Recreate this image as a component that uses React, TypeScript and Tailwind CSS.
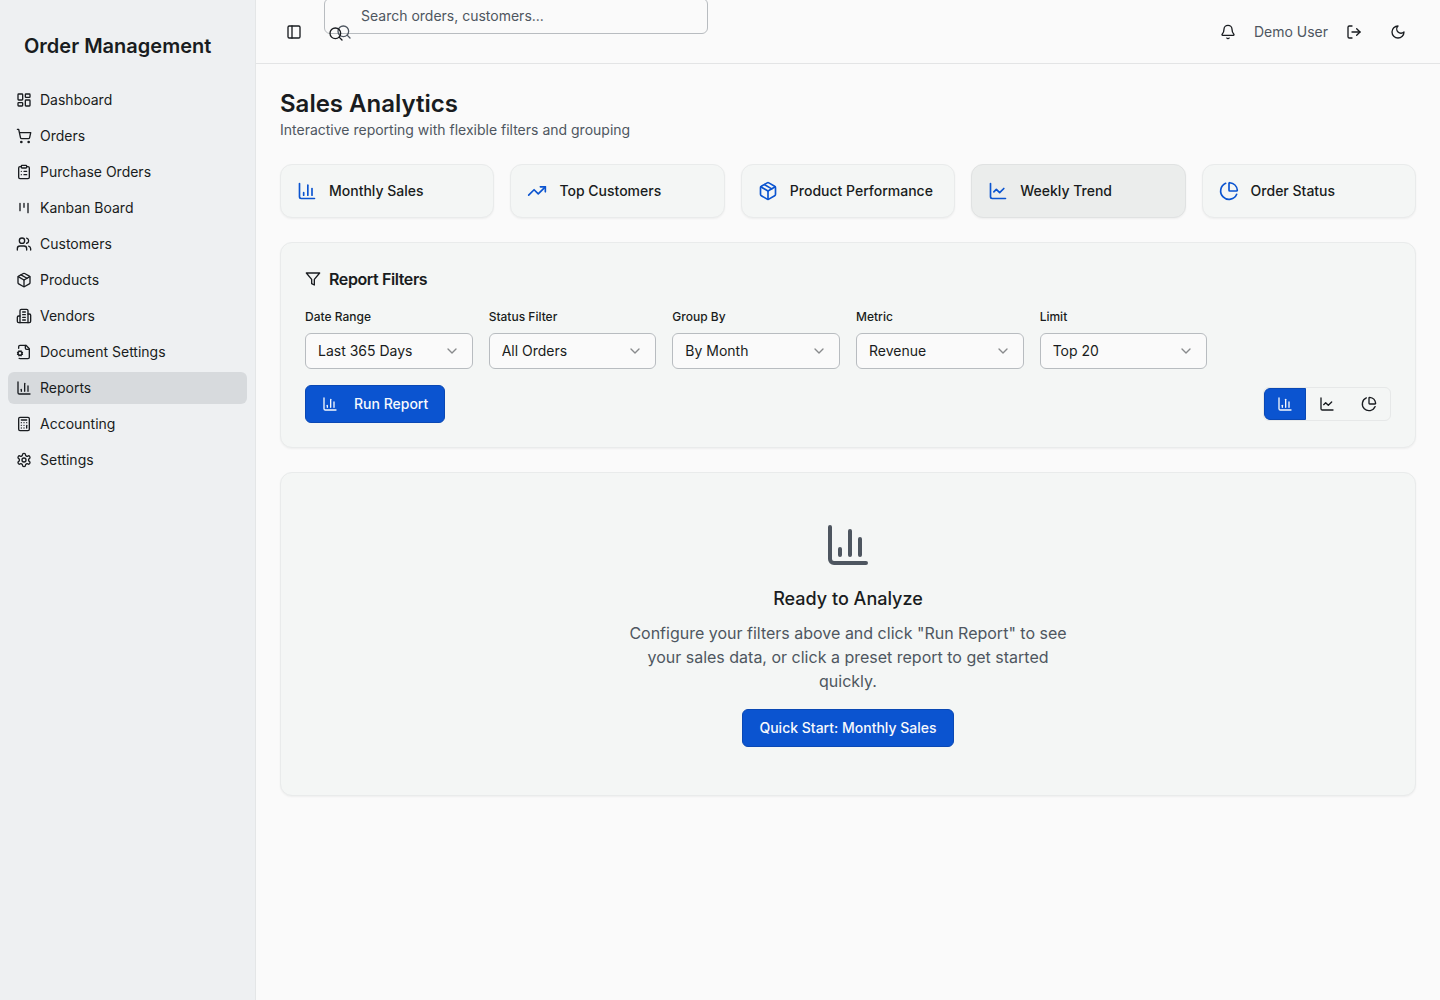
import type { ReactNode } from "react"
import {
  Bell,
  Calculator,
  ChartColumn,
  ChartLine,
  ChartPie,
  ChevronDown,
  ClipboardList,
  LayoutDashboard,
  LogOut,
  Package,
  PanelLeft,
  Search,
  ShoppingCart,
  TrendingUp,
  Users,
} from "lucide-react"

type IconProps = { className?: string }

function LineIcon({ className, children }: IconProps & { children: ReactNode }) {
  return (
    <svg
      viewBox="0 0 24 24"
      fill="none"
      stroke="currentColor"
      strokeWidth="2"
      strokeLinecap="round"
      strokeLinejoin="round"
      className={className}
      aria-hidden="true"
    >
      {children}
    </svg>
  )
}

function KanbanIcon({ className }: IconProps) {
  return (
    <LineIcon className={className}>
      <path d="M6 5v11M12 5v6M18 5v14" />
    </LineIcon>
  )
}

function BuildingIcon({ className }: IconProps) {
  return (
    <LineIcon className={className}>
      <path d="M6 22V4a2 2 0 0 1 2-2h8a2 2 0 0 1 2 2v18Z" />
      <path d="M6 12H4a2 2 0 0 0-2 2v6a2 2 0 0 0 2 2h2" />
      <path d="M18 9h2a2 2 0 0 1 2 2v9a2 2 0 0 1-2 2h-2" />
      <path d="M10 6h4M10 10h4M10 14h4M10 18h4" />
    </LineIcon>
  )
}

function FileCogIcon({ className }: IconProps) {
  return (
    <LineIcon className={className}>
      <path d="M14 2v4a2 2 0 0 0 2 2h4" />
      <path d="M4.677 21.5a2 2 0 0 0 1.313.5H18a2 2 0 0 0 2-2V7l-5-5H6a2 2 0 0 0-2 2v2.5" />
      <path d="m3.2 12.9-.9-.4M3.2 15.1l-.9.4M4.9 11.2l-.4-.9M4.9 16.8l-.4.9M7.5 10.3l-.4.9M7.5 17.7l-.4-.9M9.7 12.5l-.9.4M9.7 15.5l-.9-.4" />
      <circle cx="6" cy="14" r="3" />
    </LineIcon>
  )
}

function GearIcon({ className }: IconProps) {
  return (
    <LineIcon className={className}>
      <path d="M12.22 2h-.44a2 2 0 0 0-2 2v.18a2 2 0 0 1-1 1.73l-.43.25a2 2 0 0 1-2 0l-.15-.08a2 2 0 0 0-2.73.73l-.22.38a2 2 0 0 0 .73 2.73l.15.1a2 2 0 0 1 1 1.72v.51a2 2 0 0 1-1 1.74l-.15.09a2 2 0 0 0-.73 2.73l.22.38a2 2 0 0 0 2.73.73l.15-.08a2 2 0 0 1 2 0l.43.25a2 2 0 0 1 1 1.73V20a2 2 0 0 0 2 2h.44a2 2 0 0 0 2-2v-.18a2 2 0 0 1 1-1.73l.43-.25a2 2 0 0 1 2 0l.15.08a2 2 0 0 0 2.73-.73l.22-.39a2 2 0 0 0-.73-2.73l-.15-.08a2 2 0 0 1-1-1.74v-.5a2 2 0 0 1 1-1.74l.15-.09a2 2 0 0 0 .73-2.73l-.22-.38a2 2 0 0 0-2.73-.73l-.15.08a2 2 0 0 1-2 0l-.43-.25a2 2 0 0 1-1-1.73V4a2 2 0 0 0-2-2z" />
      <circle cx="12" cy="12" r="3" />
    </LineIcon>
  )
}

function FilterIcon({ className }: IconProps) {
  return (
    <LineIcon className={className}>
      <polygon points="22 3 2 3 10 12.46 10 19 14 21 14 12.46 22 3" />
    </LineIcon>
  )
}

function MoonIcon({ className }: IconProps) {
  return (
    <LineIcon className={className}>
      <path d="M12 3a6 6 0 0 0 9 9 9 9 0 1 1-9-9Z" />
    </LineIcon>
  )
}

const navItems = [
  { label: "Dashboard", icon: LayoutDashboard },
  { label: "Orders", icon: ShoppingCart },
  { label: "Purchase Orders", icon: ClipboardList },
  { label: "Kanban Board", icon: KanbanIcon },
  { label: "Customers", icon: Users },
  { label: "Products", icon: Package },
  { label: "Vendors", icon: BuildingIcon },
  { label: "Document Settings", icon: FileCogIcon },
  { label: "Reports", icon: ChartColumn, active: true },
  { label: "Accounting", icon: Calculator },
  { label: "Settings", icon: GearIcon },
]

const presets = [
  { label: "Monthly Sales", icon: ChartColumn },
  { label: "Top Customers", icon: TrendingUp },
  { label: "Product Performance", icon: Package },
  { label: "Weekly Trend", icon: ChartLine, active: true },
  { label: "Order Status", icon: ChartPie },
]

const filters = [
  { id: "date-range", label: "Date Range", options: ["Last 365 Days", "Last 90 Days", "Last 30 Days"] },
  { id: "status", label: "Status Filter", options: ["All Orders", "Pending", "Completed"] },
  { id: "group-by", label: "Group By", options: ["By Month", "By Week", "By Customer"] },
  { id: "metric", label: "Metric", options: ["Revenue", "Order Count"] },
  { id: "limit", label: "Limit", options: ["Top 20", "Top 10", "Top 50"] },
]

const chartTypes = [
  { label: "Bar chart", icon: ChartColumn, active: true },
  { label: "Line chart", icon: ChartLine },
  { label: "Pie chart", icon: ChartPie },
]

function Sidebar() {
  return (
    <aside className="w-64 shrink-0 border-r border-[#e4e6e7] bg-[#eef0f2]">
      <h2 className="px-6 pt-8 pb-6 text-xl font-semibold">Order Management</h2>
      <nav className="flex flex-col gap-1 px-2">
        {navItems.map(({ label, icon: Icon, active }) => (
          <a
            key={label}
            href="#"
            className={`flex h-8 items-center gap-2 rounded-md px-2 text-sm ${active ? "bg-[#d7dadd]" : ""}`}
          >
            <Icon className="size-4 shrink-0" />
            {label}
          </a>
        ))}
      </nav>
    </aside>
  )
}

function Header() {
  return (
    <header className="flex h-16 items-center justify-between border-b border-[#e3e4e5] px-6">
      <div className="flex items-center gap-4">
        <button aria-label="Toggle sidebar" className="flex size-7 items-center justify-center">
          <PanelLeft className="size-4" />
        </button>
        <div className="relative h-[68px] w-96">
          <input
            type="text"
            aria-label="Search"
            placeholder="Search orders, customers..."
            className="h-9 w-full rounded-md border border-[#b8bcc0] pr-3 pl-9 text-sm placeholder:text-[#4e5660]"
          />
          <Search className="absolute top-[26px] left-3 size-4 text-[#4e5660]" />
          <button aria-label="Submit search" className="absolute top-7 left-1">
            <Search className="size-4" />
          </button>
        </div>
      </div>
      <div className="flex items-center gap-2">
        <button aria-label="Notifications" className="flex size-9 items-center justify-center">
          <Bell className="size-4" />
        </button>
        <span className="text-sm text-[#4e5660]">Demo User</span>
        <button aria-label="Log out" className="flex size-9 items-center justify-center">
          <LogOut className="size-4" />
        </button>
        <button aria-label="Toggle theme" className="flex size-9 items-center justify-center">
          <MoonIcon className="size-4" />
        </button>
      </div>
    </header>
  )
}

function Presets() {
  return (
    <div className="grid grid-cols-5 gap-4">
      {presets.map(({ label, icon: Icon, active }) => (
        <button
          key={label}
          className={`flex items-center gap-3 rounded-xl border p-4 text-sm font-medium shadow-xs ${
            active ? "border-[#e0e2e2] bg-[#ebedec]" : "border-[#e9ebeb] bg-[#f4f6f5]"
          }`}
        >
          <Icon className="size-5 shrink-0 text-[#0b54d0]" />
          {label}
        </button>
      ))}
    </div>
  )
}

function ReportFilters() {
  return (
    <section className="rounded-xl border border-[#e9ebeb] bg-[#f4f6f5] p-6 shadow-xs">
      <h3 className="flex items-center gap-2 font-semibold tracking-tight">
        <FilterIcon className="size-4" />
        Report Filters
      </h3>
      <div className="mt-[18px] grid grid-cols-6 gap-4">
        {filters.map((filter) => (
          <div key={filter.id} className="flex flex-col gap-2">
            <label htmlFor={filter.id} className="text-xs font-medium">
              {filter.label}
            </label>
            <div className="relative">
              <select
                id={filter.id}
                className="h-9 w-full appearance-none rounded-md border border-[#b8bcc0] bg-[#fafafa] pr-8 pl-3 text-sm"
              >
                {filter.options.map((option) => (
                  <option key={option}>{option}</option>
                ))}
              </select>
              <ChevronDown className="pointer-events-none absolute top-[10px] right-3 mr-px size-4 opacity-50" />
            </div>
          </div>
        ))}
      </div>
      <div className="mt-4 flex items-center justify-between">
        <button className="flex items-center gap-4 rounded-md border border-[#0a48b4] bg-[#0b54d0] px-4 py-2 text-sm font-medium text-[#f7f9fc]">
          <ChartColumn className="size-4" />
          Run Report
        </button>
        <div className="flex overflow-hidden rounded-md border border-[#e6e8e8]">
          {chartTypes.map(({ label, icon: Icon, active }) => (
            <button
              key={label}
              aria-label={label}
              className={`flex h-8 items-center border px-3 ${
                active ? "rounded-l-md border-[#0a48b4] bg-[#0b54d0] text-[#f7f9fc]" : "border-transparent"
              }`}
            >
              <Icon className="size-4" />
            </button>
          ))}
        </div>
      </div>
    </section>
  )
}

function EmptyState() {
  return (
    <section className="flex flex-col items-center rounded-xl border border-[#e9ebeb] bg-[#f4f6f5] p-12 text-center shadow-xs">
      <ChartColumn className="mb-4 size-12 text-[#4e5660]" />
      <h3 className="mb-2 text-lg font-medium">Ready to Analyze</h3>
      <p className="mb-4 max-w-md text-[#4e5660]">
        Configure your filters above and click "Run Report" to see your sales data, or click a preset report to get
        started quickly.
      </p>
      <button className="rounded-md border border-[#0a48b4] bg-[#0b54d0] px-4 py-2 text-sm font-medium text-[#f7f9fc]">
        Quick Start: Monthly Sales
      </button>
    </section>
  )
}

export default function App() {
  return (
    <div className="flex min-h-screen bg-[#fafafa] font-[Inter,sans-serif] text-[#191c20]">
      <Sidebar />
      <div className="min-w-0 flex-1">
        <Header />
        <main className="flex flex-col gap-6 p-6">
          <div>
            <h1 className="text-2xl font-semibold">Sales Analytics</h1>
            <p className="text-sm text-[#4e5660]">Interactive reporting with flexible filters and grouping</p>
          </div>
          <Presets />
          <ReportFilters />
          <EmptyState />
        </main>
      </div>
    </div>
  )
}
